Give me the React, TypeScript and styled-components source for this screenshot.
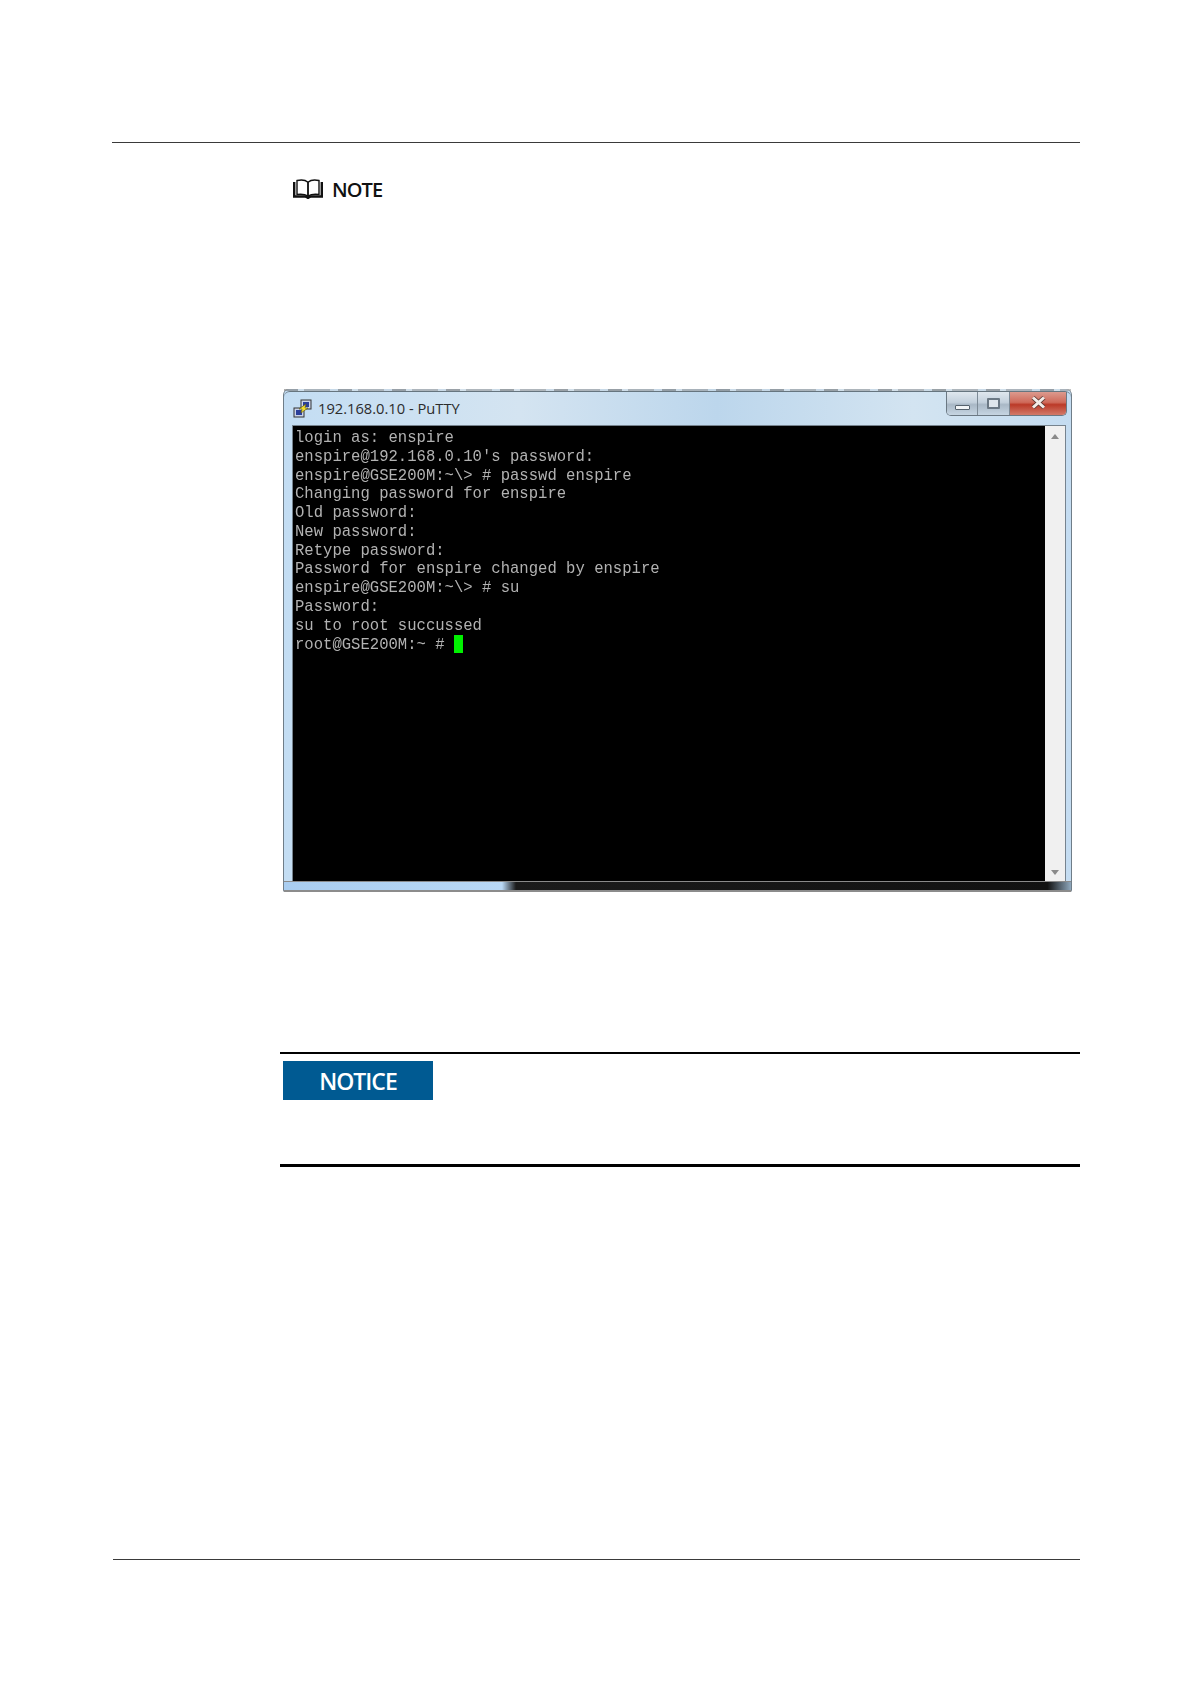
import React from 'react'
import styled, { createGlobalStyle } from 'styled-components'

const Global = createGlobalStyle`
  html, body {
    margin: 0;
    padding: 0;
    background: #fff;
  }
`

const Page = styled.div`
  box-sizing: border-box;
  width: 1191px;
  height: 1684px;
  padding: 142px 111px 124px 112px;
  display: flex;
  flex-direction: column;
  font-family: "Open Sans", "Noto Sans", sans-serif;
`

const Rule = styled.div`
  height: 1px;
  background: #3a3a3a;
`

const FooterRule = styled(Rule)`
  margin: auto 0 0 1px;
`

const Content = styled.div`
  margin-left: 168px;
  display: flex;
  flex-direction: column;
`

const NoteRow = styled.div`
  display: flex;
  align-items: center;
  gap: 9px;
  height: 26px;
  margin: 33px 0 0 13px;
  font-size: 20px;
  font-weight: 600;
  letter-spacing: -0.9px;
  color: #111;
`

const Window = styled.div`
  box-sizing: border-box;
  width: 789px;
  height: 503px;
  margin: 187px 0 0 3px;
  border-radius: 6px 6px 2px 2px;
  border: 1px solid #6f7d88;
  border-top: 0;
  border-bottom: 0;
  display: flex;
  flex-direction: column;
  background: linear-gradient(90deg, #c3ddf3 0%, #d4e4f1 30%, #bcd6ec 55%, #d3e4f1 80%, #c4dcf1 100%);
`

const BlurStrip = styled.div`
  height: 2px;
  background: repeating-linear-gradient(90deg, #777 0 14px, #d5dfe6 14px 20px, #999 20px 46px, #c8d6e2 46px 54px);
  opacity: 0.6;
  filter: blur(0.6px);
`

const TitleBar = styled.div`
  height: 34px;
  flex: none;
  padding: 0 4px 0 9px;
  display: flex;
  align-items: flex-start;
  border-top: 1px solid #66757f;
  border-radius: 6px 6px 0 0;
`

const TitleIcon = styled.svg`
  flex: none;
  margin: 7px 6px 0 0;
`

const TitleText = styled.span`
  margin-top: 6px;
  font-size: 14.7px;
  line-height: 20px;
  color: #2c2c2c;
`

const Controls = styled.div`
  margin-left: auto;
  display: flex;
  height: 23px;
  border: 1px solid #6b7883;
  border-top: 0;
  border-radius: 0 0 5px 5px;
  overflow: hidden;
`

const Control = styled.div<{ $w: number; $close?: boolean }>`
  width: ${p => p.$w}px;
  display: flex;
  align-items: center;
  justify-content: center;
  border-right: ${p => (p.$close ? '0' : '1px solid #7c8a96')};
  background: ${p =>
    p.$close
      ? 'linear-gradient(180deg, #dc9a8e 0%, #cf6a5a 45%, #bb3a28 55%, #d27a6a 100%)'
      : 'linear-gradient(180deg, #dfe7ee 0%, #c3d0dc 45%, #a9b8c6 55%, #c6d5e2 100%)'};
`

const MinGlyph = styled.div`
  width: 13px;
  height: 3px;
  margin-top: 8px;
  background: #f2f5f7;
  border: 1px solid #56626d;
  border-radius: 1px;
`

const MaxGlyph = styled.div`
  box-sizing: border-box;
  width: 13px;
  height: 11px;
  margin-top: -1px;
  background: #dfe6ec;
  border: 2px solid #6b7884;
  border-radius: 1px;
`

const CloseGlyph = styled.svg`
  margin-top: -2px;
`

const Body = styled.div`
  display: flex;
  height: 455px;
  margin: 0 6px 0 9px;
  outline: 1px solid #76838e;
`

const Terminal = styled.pre`
  flex: 1;
  margin: 0;
  padding: 3px 0 0 2px;
  background: #000;
  color: #b2b2b2;
  font-family: "Liberation Mono", "Courier New", monospace;
  font-size: 15.58px;
  line-height: 18.75px;
  font-weight: 400;
  filter: blur(0.3px);
`

const Cursor = styled.span`
  display: inline-block;
  width: 9px;
  height: 18px;
  vertical-align: -4px;
  background: #00f000;
`

const Scrollbar = styled.div`
  width: 20px;
  flex: none;
  background: #f0f0f0;
  display: flex;
  flex-direction: column;
  align-items: center;
  justify-content: space-between;
  padding: 8px 0 6px;
  box-sizing: border-box;
`

const Arrow = styled.div<{ $down?: boolean }>`
  width: 0;
  height: 0;
  border-left: 4px solid transparent;
  border-right: 4px solid transparent;
  ${p => (p.$down ? 'border-top: 5px solid #8a8a8a;' : 'border-bottom: 5px solid #8a8a8a;')}
`

const BottomEdge = styled.div`
  flex: 1;
  background: linear-gradient(90deg, #a9cdf0 0, #b9d8f5 218px, #1b1b1b 232px, #111 97%, #8fa8bd 100%);
  border-top: 1px solid #8a8a8a;
  border-bottom: 2px solid #8c8c8c;
`

const NoticeBlock = styled.div`
  margin-top: 160px;
  height: 115px;
  box-sizing: border-box;
  border-top: 2px solid #000;
  border-bottom: 3px solid #000;
  padding: 7px 0 0 3px;
`

const NoticeBadge = styled.div`
  width: 150px;
  height: 39px;
  display: flex;
  align-items: center;
  justify-content: center;
  background: #005a92;
  color: #fff;
  font-size: 23px;
  font-weight: 600;
  letter-spacing: -1px;
`

const lines = `login as: enspire
enspire@192.168.0.10's password:
enspire@GSE200M:~\\> # passwd enspire
Changing password for enspire
Old password:
New password:
Retype password:
Password for enspire changed by enspire
enspire@GSE200M:~\\> # su
Password:
su to root succussed
root@GSE200M:~ # `

const App = () => {
  return (
    <Page>
      <Global />
      <Rule />
      <Content>
        <NoteRow>
          <svg width="30" height="20" viewBox="0 0 30 20" fill="none">
            <path d="M1.2 3 V17.5 H12 C13.5 17.5 14 18.2 15 19 C16 18.2 16.5 17.5 18 17.5 H28.8 V3" stroke="#111" strokeWidth="2.4" />
            <path d="M4 1.5 C8 0.6 12.5 1 15 3.2 V17 C12.5 15.5 8 15 4 15.5 Z" stroke="#111" strokeWidth="1.4" />
            <path d="M26 1.5 C22 0.6 17.5 1 15 3.2 V17 C17.5 15.5 22 15 26 15.5 Z" stroke="#111" strokeWidth="1.4" />
          </svg>
          NOTE
        </NoteRow>

        <Window>
          <BlurStrip />
          <TitleBar>
            <TitleIcon width="19" height="19" viewBox="0 0 19 19">
              <rect x="8" y="1" width="10" height="9" fill="#c9d3ea" stroke="#333" />
              <rect x="10" y="3" width="6" height="5" fill="#2b3f9a" />
              <rect x="1" y="9" width="10" height="9" fill="#c9d3ea" stroke="#333" />
              <rect x="3" y="11" width="6" height="5" fill="#2b3f9a" />
              <path d="M6 10 L13 5 L12 9 L15 9 L8 14 L9 10 Z" fill="#f2dc2e" stroke="#57500f" strokeWidth="0.6" />
            </TitleIcon>
            <TitleText>192.168.0.10 - PuTTY</TitleText>
            <Controls>
              <Control $w={30}><MinGlyph /></Control>
              <Control $w={31}><MaxGlyph /></Control>
              <Control $w={56} $close>
                <CloseGlyph width="17" height="13" viewBox="0 0 17 13">
                  <path d="M3 1.5 L14 11.5 M14 1.5 L3 11.5" stroke="#5f3a34" strokeWidth="4.4" />
                  <path d="M3 1.5 L14 11.5 M14 1.5 L3 11.5" stroke="#f3ece8" strokeWidth="3" />
                </CloseGlyph>
              </Control>
            </Controls>
          </TitleBar>
          <Body>
            <Terminal>{lines}<Cursor /></Terminal>
            <Scrollbar>
              <Arrow />
              <Arrow $down />
            </Scrollbar>
          </Body>
          <BottomEdge />
        </Window>

        <NoticeBlock>
          <NoticeBadge>NOTICE</NoticeBadge>
        </NoticeBlock>
      </Content>
      <FooterRule />
    </Page>
  )
}

export default App
